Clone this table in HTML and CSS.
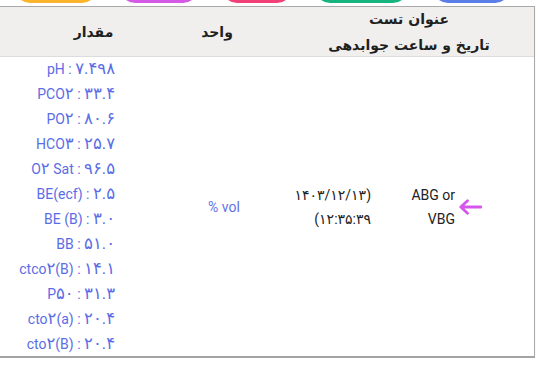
FILE: index.html
```html
<!DOCTYPE html>
<html lang="fa">
<head>
<meta charset="utf-8">
<link rel="stylesheet" href="styles.css">
</head>
<body>
<div class="tabs">
  <div class="tab t-orange"></div>
  <div class="tab t-magenta"></div>
  <div class="tab t-pink"></div>
  <div class="tab t-green"></div>
  <div class="tab t-blue"></div>
</div>
<div class="report" dir="rtl">
  <div class="head h-test">
    <div>عنوان تست</div>
    <div>تاریخ و ساعت جوابدهی</div>
  </div>
  <div class="head h-unit">واحد</div>
  <div class="head h-value">مقدار</div>

  <div class="cell c-test">
    <svg class="arrow" width="24" height="16" viewBox="0 0 24 16">
      <path d="M23 8H3M9.5 1.8L2.8 8l6.7 6.2" fill="none" stroke="#d657ec" stroke-width="2.8" stroke-linecap="round" stroke-linejoin="round"/>
    </svg>
    <div class="name" dir="ltr">ABG or<br>VBG</div>
    <div class="date">
      <div>(۱۴۰۳/۱۲/۱۳</div>
      <div>۱۲:۳۵:۳۹)</div>
    </div>
  </div>
  <div class="cell c-unit"><span dir="ltr">% vol</span></div>
  <div class="cell c-value" dir="ltr">
    <div>pH : <span class="n">۷.۴۹۸</span></div>
    <div>PCO<span class="n">۲</span> : <span class="n">۳۳.۴</span></div>
    <div>PO<span class="n">۲</span> : <span class="n">۸۰.۶</span></div>
    <div>HCO<span class="n">۳</span> : <span class="n">۲۵.۷</span></div>
    <div>O<span class="n">۲</span> Sat : <span class="n">۹۶.۵</span></div>
    <div>BE(ecf) : <span class="n">۲.۵</span></div>
    <div>BE (B) : <span class="n">۳.۰</span></div>
    <div>BB : <span class="n">۵۱.۰</span></div>
    <div>ctco<span class="n">۲</span>(B) : <span class="n">۱۴.۱</span></div>
    <div>P<span class="n">۵۰</span> : <span class="n">۳۱.۳</span></div>
    <div>cto<span class="n">۲</span>(a) : <span class="n">۲۰.۴</span></div>
    <div>cto<span class="n">۲</span>(B) : <span class="n">۲۰.۴</span></div>
  </div>
</div>
</body>
</html>
```
FILE: styles.css
```css
html, body {
  margin: 0;
  padding: 0;
  background: #ffffff;
}
body {
  font-family: Roboto, "DejaVu Sans", sans-serif;
  font-size: 14px;
  color: #222222;
}
.tabs {
  display: flex;
  height: 3px;
  margin-bottom: 3px;
  overflow: hidden;
}
.tab {
  height: 30px;
  margin-top: -27px;
  border-radius: 15px;
  flex: none;
}
.t-orange { width: 82px; margin-left: 15px; background: #fbb42c; }
.t-magenta { width: 78px; margin-left: 23px; background: #d45ae6; }
.t-pink { width: 70px; margin-left: 24px; background: #f23f78; }
.t-green { width: 93px; margin-left: 23px; background: #17b47f; }
.t-blue { width: 77px; margin-left: 25px; background: #5a7de6; }

.report {
  width: 534px;
  display: grid;
  grid-template-columns: 250px 120px 164px;
  grid-template-rows: 50px 299px;
  border-top: 1px solid #a9a9a9;
  border-right: 1px solid #a9a9a9;
  border-bottom: 2px solid #a3a3a3;
  box-shadow: 0 1px 1px rgba(0,0,0,0.12);
}
.head {
  background: #f0efee;
  border-bottom: 1px solid #dcdcdc;
  font-family: "DejaVu Sans", sans-serif;
  font-weight: bold;
  font-size: 14px;
  color: #1f1f1f;
  display: flex;
  flex-direction: column;
  justify-content: center;
  align-items: center;
}
.h-test { line-height: 26px; }
.h-unit { padding-right: 14px; }
.h-value { padding-left: 23px; }

.cell {
  display: flex;
  align-items: center;
}
.c-test {
  padding-right: 52px;
  gap: 3px;
}
.arrow {
  flex: none;
}
.name {
  text-align: right;
  line-height: 24px;
  width: 50px;
  color: #222222;
}
.date {
  margin-right: 31px;
  line-height: 24px;
  color: #222222;
}
.c-unit {
  justify-content: center;
  color: #6272e6;
}
.c-value {
  flex-direction: column;
  align-items: flex-end;
  justify-content: flex-start;
  padding-right: 49px;
  line-height: 25px;
  color: #5a6de6;
}
.n {
  font-size: 16.5px;
  line-height: 1;
}
```
